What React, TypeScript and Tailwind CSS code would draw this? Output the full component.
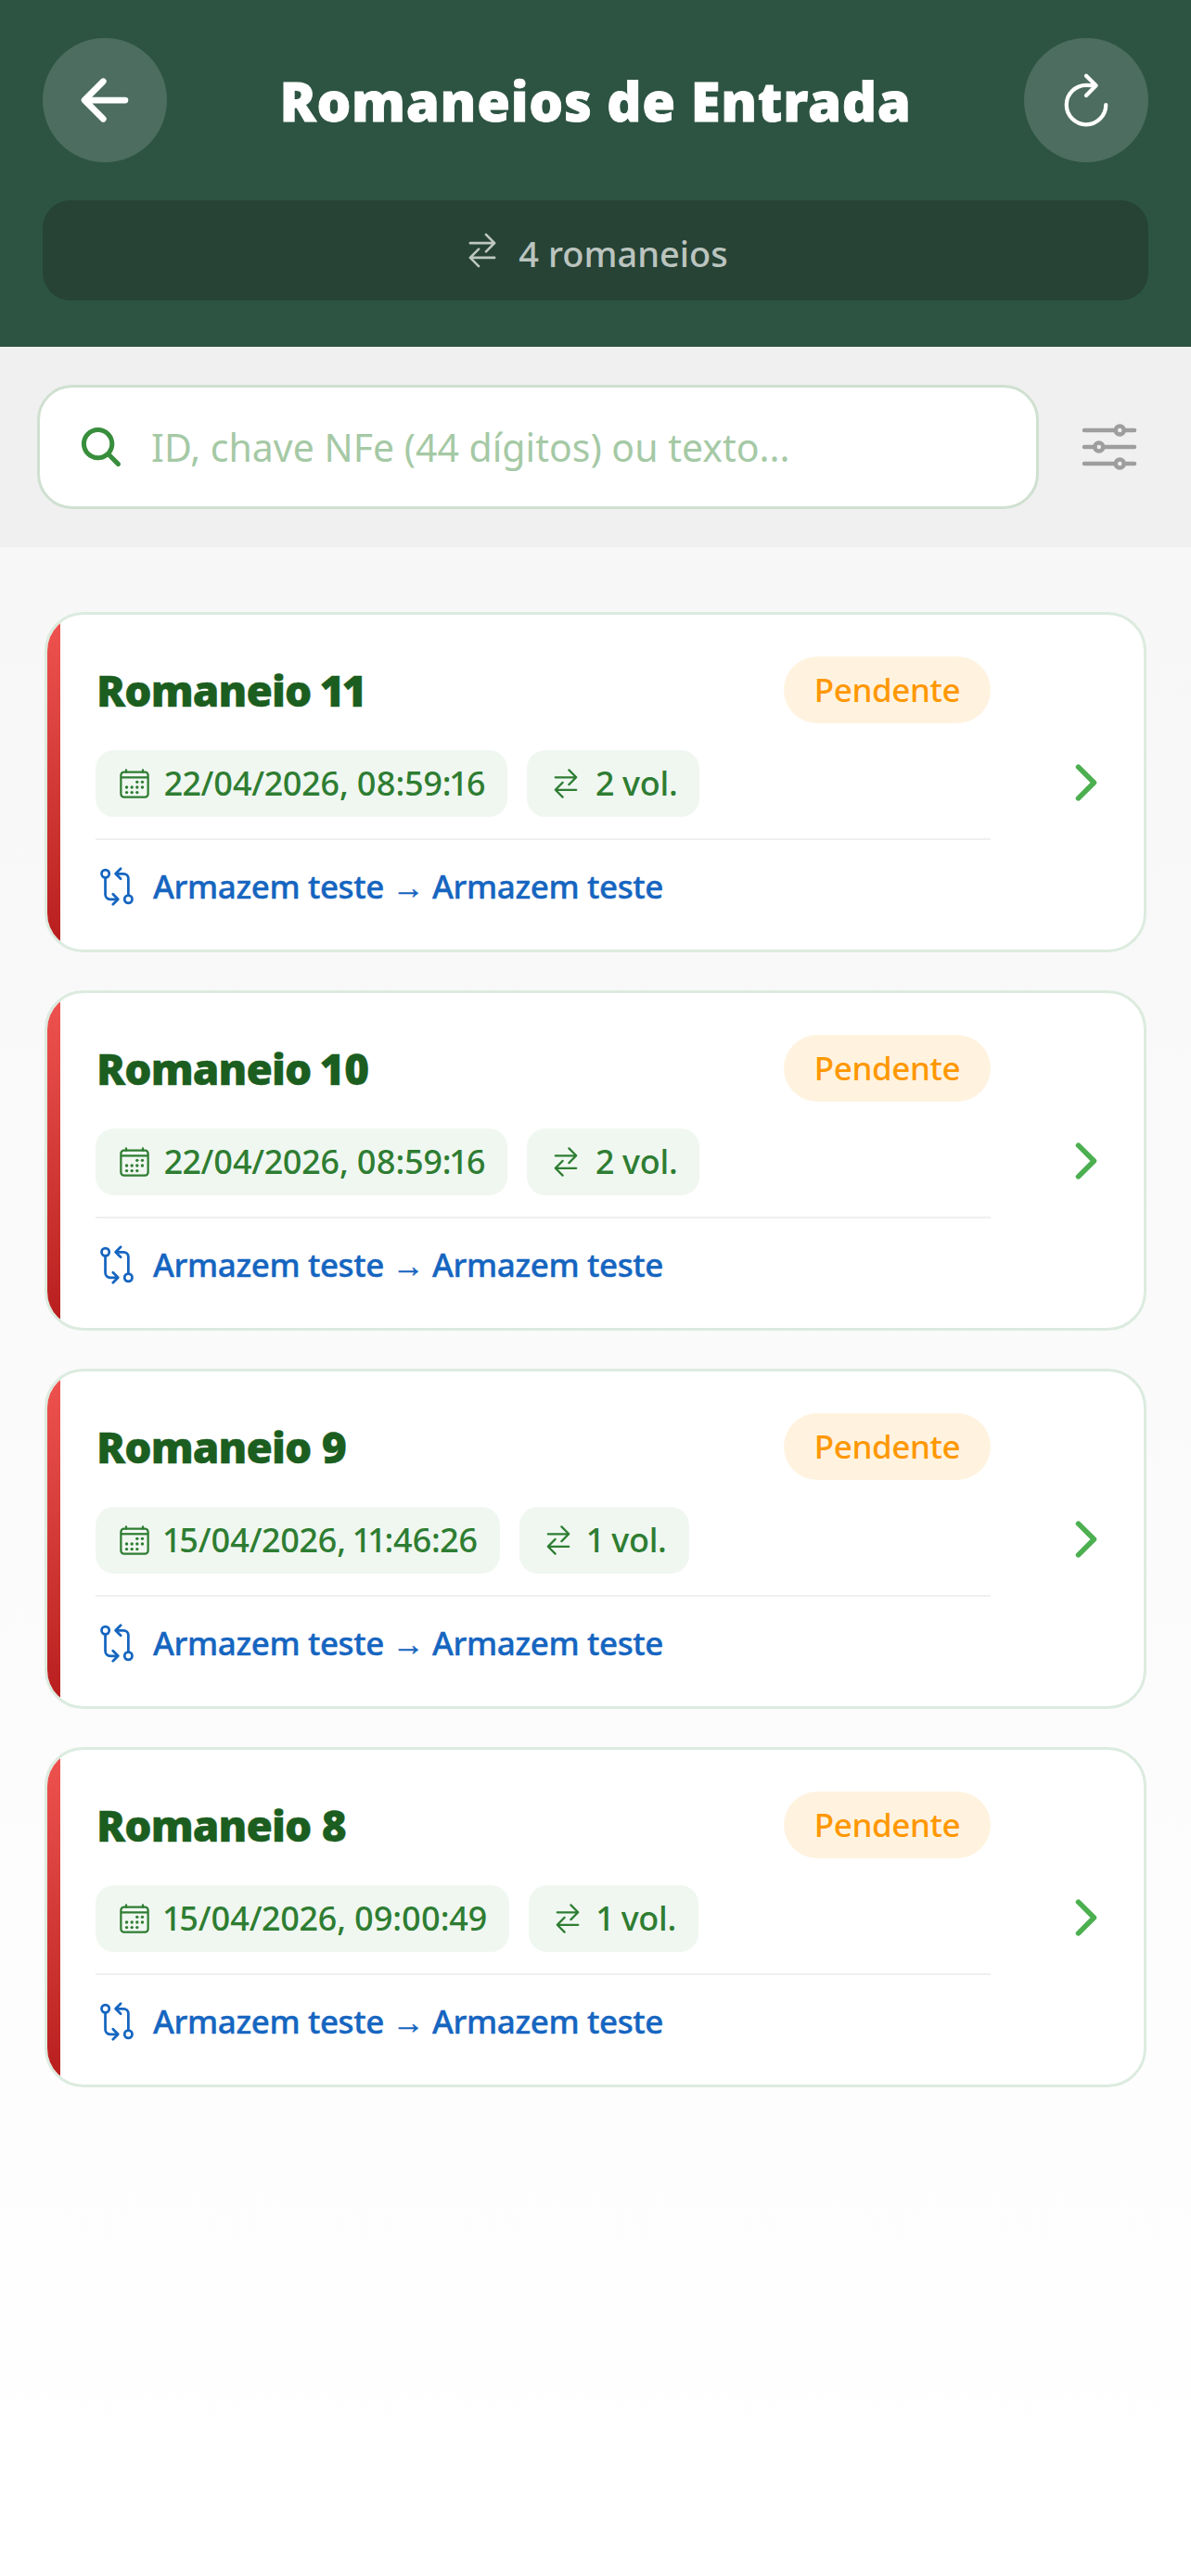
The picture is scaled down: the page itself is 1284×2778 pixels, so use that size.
import {
  IoArrowBack,
  IoRefreshOutline,
  IoSwapHorizontalOutline,
  IoSearch,
  IoOptionsOutline,
  IoCalendarOutline,
  IoGitCompareOutline,
  IoChevronForward,
} from "react-icons/io5";

const romaneios = [
  { id: 11, date: "22/04/2026, 08:59:16", vol: "2 vol." },
  { id: 10, date: "22/04/2026, 08:59:16", vol: "2 vol." },
  { id: 9, date: "15/04/2026, 11:46:26", vol: "1 vol." },
  { id: 8, date: "15/04/2026, 09:00:49", vol: "1 vol." },
];

function Chip({ icon, text }: { icon: React.ReactNode; text: string }) {
  return (
    <div className="flex h-[72px] items-center gap-[14px] rounded-[20px] bg-[#f0f7f1] px-[24px] text-[36px] font-medium tracking-[-0.3px] text-[#2e7d32] proportional-nums">
      {icon}
      <span>{text}</span>
    </div>
  );
}

function RomaneioCard({ id, date, vol }: { id: number; date: string; vol: string }) {
  return (
    <div className="flex h-[367px] overflow-hidden rounded-[42px] border-[3px] border-[#dcebdf] bg-white">
      <div className="w-[14px] shrink-0 bg-gradient-to-b from-[#ef5350] to-[#b71c1c]" />
      <div className="ml-[38px] flex w-[965px] flex-col pt-[45px]">
        <div className="flex h-[72px] items-center justify-between">
          <span className="pl-[1px] text-[46px] font-black leading-none tracking-[-0.9px] text-[#1b5e20] proportional-nums [-webkit-text-stroke:0.4px_#1b5e20]">
            Romaneio {id}
          </span>
          <span className="flex h-[72px] w-[223px] items-center justify-center rounded-full bg-[#fff3e0] text-[35px] font-medium tracking-[-0.4px] text-[#ff9800]">
            Pendente
          </span>
        </div>
        <div className="mt-[29px] flex gap-[21px]">
          <Chip icon={<IoCalendarOutline className="size-[36px]" />} text={date} />
          <Chip icon={<IoSwapHorizontalOutline className="size-[36px]" />} text={vol} />
        </div>
        <div className="mt-[23px] h-[2px] bg-[#f0f0f0]" />
        <div className="mt-[24px] flex items-center gap-[17px] pl-[1px] text-[35px] font-medium tracking-[-0.38px] text-[#1565c0] [-webkit-text-stroke:0.4px_#1565c0]">
          <IoGitCompareOutline className="size-[44px]" />
          <span>Armazem teste → Armazem teste</span>
        </div>
      </div>
      <div className="flex flex-1 items-center justify-end pr-[32px]">
        <IoChevronForward className="size-[60px] text-[#4caf50]" />
      </div>
    </div>
  );
}

export default function App() {
  return (
    <div className="flex min-h-[2778px] flex-col bg-gradient-to-b from-[#f5f5f5] to-white font-['Noto_Sans',sans-serif]">
      <header className="bg-[#2d5443] px-[46px] pb-[50px] pt-[41px]">
        <div className="flex items-center justify-between">
          <button className="flex size-[134px] items-center justify-center rounded-full bg-white/15 text-white">
            <IoArrowBack className="size-[72px]" />
          </button>
          <h1 className="text-[58px] font-black tracking-[0.7px] text-white [-webkit-text-stroke:0.8px_white]">
            Romaneios de Entrada
          </h1>
          <button className="flex size-[134px] items-center justify-center rounded-full bg-white/15 text-white">
            <IoRefreshOutline className="size-[68px]" />
          </button>
        </div>
        <div className="mt-[41px] flex h-[108px] items-center justify-center gap-[18px] rounded-[30px] bg-[#264335] text-[38px] font-medium text-white/70">
          <IoSwapHorizontalOutline className="size-[42px]" />
          <span className="pt-[6px]">4 romaneios</span>
        </div>
      </header>

      <div className="flex h-[216px] items-center gap-[40px] bg-[#f0f0f0] pl-[40px] pr-[52px]">
        <div className="flex h-[134px] flex-1 items-center gap-[28px] rounded-[38px] border-[3px] border-[#cfe0d0] bg-white pl-[40px]">
          <IoSearch className="size-[52px] text-[#388e3c]" />
          <span className="pt-[2px] text-[41px] text-[#a5c9a5]">ID, chave NFe (44 dígitos) ou texto...</span>
        </div>
        <IoOptionsOutline className="size-[72px] text-[#9e9e9e]" />
      </div>

      <main className="flex flex-col gap-[41px] pb-[40px] pl-[48px] pr-[48px] pt-[70px]">
        {romaneios.map((r) => (
          <RomaneioCard key={r.id} {...r} />
        ))}
      </main>
    </div>
  );
}
